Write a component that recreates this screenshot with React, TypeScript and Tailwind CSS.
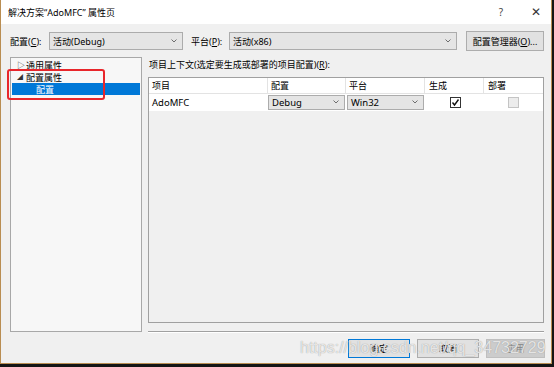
import React from 'react';

const font = { fontFamily: '"Noto Sans", "Noto Sans CJK SC", sans-serif' };

const Chevron: React.FC = () => (
  <svg width="6" height="4" viewBox="0 0 6 4" className="shrink-0">
    <polyline points="0.5,0.5 3,3 5.5,0.5" fill="none" stroke="#606060" strokeWidth="0.9" />
  </svg>
);

interface ComboProps {
  value: string;
  className: string;
}

const Combo: React.FC<ComboProps> = ({ value, className }) => (
  <div className={`flex items-center justify-between bg-[#e5e5e5] border border-[#acacac] pl-[3px] pr-[5px] ${className}`}>
    <span>{value}</span>
    <Chevron />
  </div>
);

const Button: React.FC<{ children: React.ReactNode; className?: string }> = ({ children, className = '' }) => (
  <div className={`flex items-center justify-center border ${className}`}>{children}</div>
);

const App: React.FC = () => {
  return (
    <div className="relative w-[554px] h-[367px] bg-[#151515] overflow-hidden text-[9px] text-black leading-none" style={font}>
      <div className="w-[552px] h-[364px] flex flex-col bg-[#f0f0f0] border-l border-r border-b border-[#b98d52]">
        {/* title bar */}
        <div className="h-[24px] bg-white flex items-center pl-[7px] shrink-0">
          <span className="text-[9px]">解决方案“AdoMFC” 属性页</span>
          <span className="ml-auto text-[10px] text-[#444]">?</span>
          <span className="ml-[28px] mr-[10px] text-[12px] text-[#333]">✕</span>
        </div>

        {/* config row */}
        <div className="flex items-center h-[20px] mt-[7px] pl-[9px] shrink-0">
          <span className="w-[39px]">配置(<u>C</u>):</span>
          <Combo value="活动(Debug)" className="w-[134px] h-[18px]" />
          <span className="ml-[8px] w-[38px]">平台(<u>P</u>):</span>
          <Combo value="活动(x86)" className="w-[228px] h-[18px]" />
          <Button className="ml-[9px] w-[78px] h-[20px] bg-[#e1e1e1] border-[#adadad]">
            配置管理器(<u>O</u>)...
          </Button>
        </div>

        {/* main */}
        <div className="flex mt-[6px] pl-[9px] h-[276px] shrink-0">
          <div className="w-[132px] h-[275px] bg-[#f7f7f7] border border-[#a8a8a8] pt-[1px] px-[1px]">
            <div className="flex items-center h-[12px] pl-[5px]">
              <span className="text-[8px] text-[#333] w-[9px]">▷</span>
              <span>通用属性</span>
            </div>
            <div className="flex items-center h-[12px] pl-[5px]">
              <span className="text-[6px] text-[#333] w-[9px]">◢</span>
              <span>配置属性</span>
            </div>
            <div className="flex items-center h-[12px] bg-[#0078d7] text-white pl-[24px]">配置</div>
          </div>

          <div className="ml-[6px] w-[396px] flex flex-col">
            <div className="h-[20px] flex items-start pt-[3px] pl-[1px]">
              项目上下文(选定要生成或部署的项目配置)(<u>R</u>):
            </div>
            <div className="h-[247px] border border-[#a0a0a0] bg-[#f0f0f0] flex flex-col">
              <div className="flex h-[16px] bg-white border-b border-[#e3e3e3]">
                <div className="w-[119px] flex items-center pl-[3px] border-r border-[#e3e3e3]">项目</div>
                <div className="w-[78px] flex items-center pl-[3px] border-r border-[#e3e3e3]">配置</div>
                <div className="w-[79px] flex items-center pl-[3px] border-r border-[#e3e3e3]">平台</div>
                <div className="w-[59px] flex items-center pl-[4px] border-r border-[#e3e3e3]">生成</div>
                <div className="w-[59px] flex items-center pl-[4px]">部署</div>
              </div>
              <div className="flex h-[17px] bg-white">
                <div className="w-[119px] flex items-center pl-[3px] text-[9.5px]">AdoMFC</div>
                <div className="w-[78px] flex items-center pr-[1px]">
                  <Combo value="Debug" className="w-full h-[15px] text-[9.5px]" />
                </div>
                <div className="w-[79px] flex items-center pl-[1px] pr-[1px]">
                  <Combo value="Win32" className="w-full h-[15px] text-[9.5px]" />
                </div>
                <div className="w-[59px] flex items-center justify-center pl-[1px]">
                  <div className="w-[11px] h-[11px] border border-[#333] bg-white flex items-center justify-center">
                    <svg width="9" height="9" viewBox="0 0 9 9">
                      <polyline points="1.5,4.5 3.5,7 7.5,1.5" fill="none" stroke="#111" strokeWidth="1.4" />
                    </svg>
                  </div>
                </div>
                <div className="w-[59px] flex items-center justify-center">
                  <div className="w-[11px] h-[11px] border border-[#c4c4c4] bg-[#ececec]" />
                </div>
              </div>
            </div>
            <div className="mt-[8px] h-[2px] border-t border-[#a0a0a0] border-b border-b-white" />
          </div>
        </div>

        {/* buttons */}
        <div className="flex justify-end gap-[7px] mt-[6px] pr-[6px] shrink-0">
          <Button className="w-[62px] h-[19px] bg-[#e1e1e1] border-[#0078d7]">确定</Button>
          <Button className="w-[62px] h-[19px] bg-[#e1e1e1] border-[#adadad]">取消</Button>
          <Button className="w-[59px] h-[19px] bg-[#cccccc] border-[#bfbfbf] text-[#838383]">应用</Button>
        </div>
      </div>

      {/* highlight box */}
      <div className="absolute left-[7px] top-[69px] w-[98px] h-[31px] border-2 border-[#e8262b] rounded-[3px]" />

      {/* watermark */}
      <div
        className="absolute left-[300px] top-[339px] whitespace-nowrap text-[16px] leading-[18px] text-white/75 [text-shadow:0_0_1px_#8a8a8a]"
        style={{ fontFamily: '"Liberation Sans", Arial, sans-serif' }}
      >
        https://blog.csdn.net/qq_34732729
      </div>
    </div>
  );
};

export default App;
